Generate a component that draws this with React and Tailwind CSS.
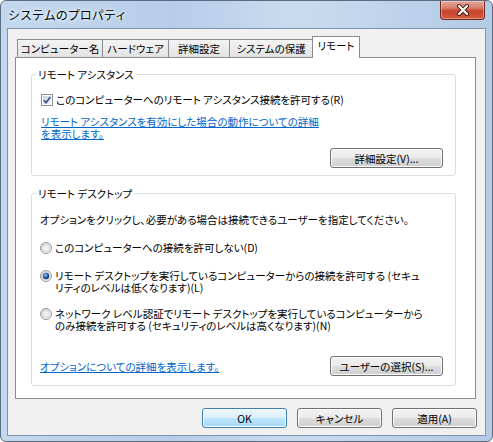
import React from 'react';

const base = "font-['Noto_Sans_CJK_JP','Noto_Sans',sans-serif] [font-feature-settings:'palt'] text-[10.5px] leading-[11px]";
const ui = `${base} text-black`;
const twoLine = "font-['Noto_Sans_CJK_JP','Noto_Sans',sans-serif] [font-feature-settings:'palt'] text-[10.5px] leading-[12px] text-black";

const Checkbox = () => (
  <svg width="12" height="12" viewBox="0 0 12 12" className="shrink-0">
    <defs>
      <linearGradient id="cbfill" x1="0" y1="0" x2="1" y2="1">
        <stop offset="0" stopColor="#cfd3dd" />
        <stop offset="1" stopColor="#f4f5f8" />
      </linearGradient>
    </defs>
    <rect x="0.5" y="0.5" width="11" height="11" fill="#fdfdfd" stroke="#8e8f8f" />
    <rect x="2" y="2" width="8" height="8" fill="url(#cbfill)" />
    <path d="M2.8 6.2 L5 8.6 L9.4 3" fill="none" stroke="#3f5596" strokeWidth="1.7" />
  </svg>
);

const Radio = ({ checked }) => (
  <svg width="12" height="12" viewBox="0 0 12 12" className="shrink-0">
    <defs>
      <linearGradient id="rdring" x1="0" y1="0" x2="1" y2="1">
        <stop offset="0" stopColor="#d4d4d4" />
        <stop offset="1" stopColor="#f9f9f9" />
      </linearGradient>
      <radialGradient id="rddot" cx="0.4" cy="0.35" r="0.7">
        <stop offset="0" stopColor="#a9d5f8" />
        <stop offset="0.45" stopColor="#2f6fb4" />
        <stop offset="1" stopColor="#0c2f5c" />
      </radialGradient>
    </defs>
    <circle cx="6" cy="6" r="5.5" fill="url(#rdring)" stroke="#9a9a9a" />
    <circle cx="6" cy="6" r="3.6" fill="#efefef" stroke="#c8c8c8" strokeWidth="0.6" />
    {checked ? <circle cx="6" cy="6" r="3.2" fill="url(#rddot)" /> : null}
  </svg>
);

const Button = ({ children, width = 'w-[113px]', isDefault = false }) => (
  <button
    className={`${width} h-[20px] rounded-[3px] border ${ui} ${
      isDefault
        ? 'border-[#3c7fb1] bg-[linear-gradient(#eaf6fd_0%,#d9f0fc_50%,#bee6fd_51%,#a7d9f5_100%)]'
        : 'border-[#707070] bg-[linear-gradient(#f2f2f2_0%,#ebebeb_50%,#dddddd_51%,#cfcfcf_100%)]'
    } shadow-[inset_0_0_0_1px_#fcfcfc] flex items-center justify-center`}
  >
    {children}
  </button>
);

const Tab = ({ label, width, selected = false }) =>
  selected ? (
    <div
      className={`${width} h-[22px] -mb-px relative z-10 bg-white border border-b-0 border-[#898c95] ${ui} flex justify-center pt-[3px]`}
    >
      {label}
    </div>
  ) : (
    <div
      className={`${width} h-[18px] border border-b-0 border-[#898c95] bg-[linear-gradient(#f3f3f3,#e3e3e3)] ${ui} flex justify-center pt-[3px] -mr-px`}
    >
      {label}
    </div>
  );

const Group = ({ title, className = '', children }) => (
  <fieldset className={`w-[425px] border border-[#d5dfe5] rounded-[3px] ${className}`}>
    <legend className={`ml-[4px] px-[2px] h-[13px] flex items-center ${ui}`}>{title}</legend>
    {children}
  </fieldset>
);

const Link = ({ children, lead = 'leading-[11px]' }) => (
  <span className={`font-['Noto_Sans_CJK_JP','Noto_Sans',sans-serif] [font-feature-settings:'palt'] text-[10.5px] ${lead} text-[#0066cc] underline underline-offset-[1px]`}>
    {children}
  </span>
);

export default function App() {
  return (
    <div className="w-[493px] h-[442px] rounded-[6px] border border-[#5c6c80] bg-[linear-gradient(90deg,#c3d8ef_0%,#b6cee9_35%,#c9dbef_60%,#b3cbe6_100%)] flex flex-col relative overflow-hidden">
      {/* Title bar */}
      <div className="h-[27px] shrink-0 pl-[7px] flex items-center">
        <span className="font-['Noto_Sans_CJK_JP',sans-serif] text-[12px] text-black [text-shadow:0_0_6px_#ffffff,0_0_3px_#ffffff]">
          システムのプロパティ
        </span>
      </div>

      {/* Close button */}
      <div className="absolute top-0 right-[7px] w-[45px] h-[19px] rounded-b-[4px] border border-t-0 border-[#6e2a1e] bg-[linear-gradient(#e9a899_0%,#d67c6a_40%,#c5432c_55%,#d35a3f_100%)] shadow-[inset_0_0_0_1px_rgba(255,255,255,0.35)] flex items-center justify-center">
        <svg width="14" height="12" viewBox="0 0 14 12">
          <path d="M3 2 L11 10 M11 2 L3 10" stroke="#4a1a12" strokeWidth="4" strokeLinecap="round" />
          <path d="M3 2 L11 10 M11 2 L3 10" stroke="#ffffff" strokeWidth="2.2" strokeLinecap="round" />
        </svg>
      </div>

      {/* Client area */}
      <div className="flex-1 ml-[6px] mr-[6px] mb-[5px] border border-[#8393a8] bg-[#f0f0f0] flex flex-col pt-[7px]">
        <div className="flex items-end h-[21px] ml-[9px]">
          <Tab label="コンピューター名" width="w-[86px]" />
          <Tab label="ハードウェア" width="w-[67px]" />
          <Tab label="詳細設定" width="w-[62px]" />
          <Tab label="システムの保護" width="w-[84px]" />
          <Tab label="リモート" width="w-[48px]" selected />
        </div>

        <div className="ml-[7px] w-[461px] h-[342px] border border-[#898c95] bg-white flex flex-col">
          {/* Remote Assistance */}
          <Group title="リモート アシスタンス" className="ml-[15px] mt-[10px]">
            <div className="pl-[9px] pr-[12px] pb-[7px] flex flex-col">
              <div className="mt-[12px] flex items-center gap-[3px] h-[13px]">
                <Checkbox />
                <span className={`${ui} whitespace-nowrap`}>
                  このコンピューターへのリモート アシスタンス接続を許可する(R)
                </span>
              </div>
              <div className="mt-[10px] flex flex-col items-start whitespace-nowrap">
                <Link lead="leading-[12px]">リモート アシスタンスを有効にした場合の動作についての詳細</Link>
                <Link lead="leading-[12px]">を表示します。</Link>
              </div>
              <div className="mt-[8px] flex justify-end">
                <Button>詳細設定(V)...</Button>
              </div>
            </div>
          </Group>

          {/* Remote Desktop */}
          <Group title="リモート デスクトップ" className="ml-[15px] mt-[11px]">
            <div className="pl-[8px] pr-[12px] pb-[9px] flex flex-col">
              <p className={`${ui} mt-[14px] whitespace-nowrap`}>
                オプションをクリックし、必要がある場合は接続できるユーザーを指定してください。
              </p>

              <div className="mt-[17px] flex items-start gap-[3px]">
                <Radio />
                <span className={`${ui} whitespace-nowrap`}>このコンピューターへの接続を許可しない(D)</span>
              </div>

              <div className="mt-[16px] flex items-start gap-[3px]">
                <Radio checked />
                <div className="flex flex-col whitespace-nowrap">
                  <span className={twoLine}>
                    リモート デスクトップを実行しているコンピューターからの接続を許可する (セキュ
                  </span>
                  <span className={twoLine}>リティのレベルは低くなります)(L)</span>
                </div>
              </div>

              <div className="mt-[14px] flex items-start gap-[3px]">
                <Radio />
                <div className="flex flex-col whitespace-nowrap">
                  <span className={twoLine}>
                    ネットワーク レベル認証でリモート デスクトップを実行しているコンピューターから
                  </span>
                  <span className={twoLine}>のみ接続を許可する (セキュリティのレベルは高くなります)(N)</span>
                </div>
              </div>

              <div className="mt-[24px] flex items-center justify-between">
                <Link>オプションについての詳細を表示します。</Link>
                <Button>ユーザーの選択(S)...</Button>
              </div>
            </div>
          </Group>
        </div>

        {/* Dialog buttons */}
        <div className="mt-[9px] flex justify-end gap-[10px] pr-[8px]">
          <Button width="w-[85px]" isDefault>OK</Button>
          <Button width="w-[85px]">キャンセル</Button>
          <Button width="w-[85px]">適用(A)</Button>
        </div>
      </div>
    </div>
  );
}
